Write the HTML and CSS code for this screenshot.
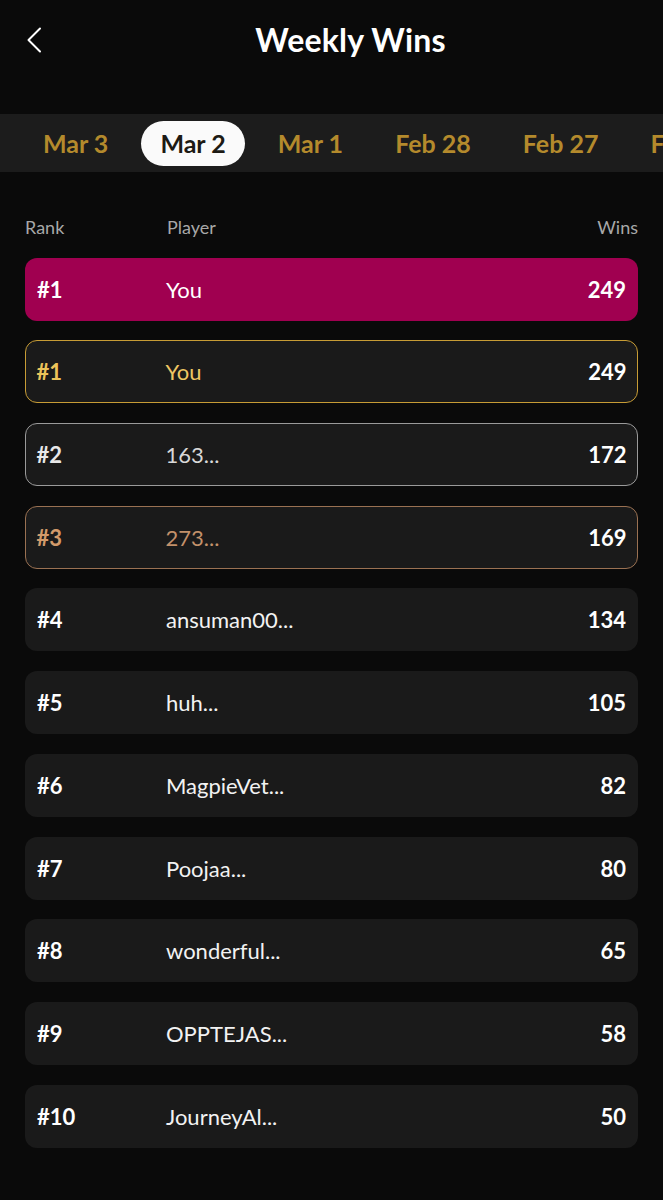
FILE: index.html
```html
<!DOCTYPE html>
<html>
<head>
<meta charset="utf-8">
<link rel="stylesheet" href="styles.css">
</head>
<body>
<div class="app">
  <header class="topbar">
    <button class="back" aria-label="Back">
      <svg width="16" height="26" viewBox="0 0 16 26"><path d="M14 1.5 L2.5 13 L14 24.5" fill="none" stroke="#fff" stroke-width="2" stroke-linecap="round" stroke-linejoin="round"/></svg>
    </button>
    <h1 class="title">Weekly Wins</h1>
  </header>

  <nav class="tabs">
    <span class="tab">Mar 3</span>
    <span class="tab active">Mar 2</span>
    <span class="tab">Mar 1</span>
    <span class="tab">Feb 28</span>
    <span class="tab">Feb 27</span>
    <span class="tab">Feb 26</span>
  </nav>

  <section class="board">
    <div class="cols">
      <span class="c-rank">Rank</span>
      <span class="c-player">Player</span>
      <span class="c-wins">Wins</span>
    </div>
    <div class="row me"><span class="rank">#1</span><span class="name">You</span><span class="wins">249</span></div>
    <div class="row gold"><span class="rank">#1</span><span class="name">You</span><span class="wins">249</span></div>
    <div class="row silver"><span class="rank">#2</span><span class="name">163...</span><span class="wins">172</span></div>
    <div class="row bronze"><span class="rank">#3</span><span class="name">273...</span><span class="wins">169</span></div>
    <div class="row"><span class="rank">#4</span><span class="name">ansuman00...</span><span class="wins">134</span></div>
    <div class="row"><span class="rank">#5</span><span class="name">huh...</span><span class="wins">105</span></div>
    <div class="row"><span class="rank">#6</span><span class="name">MagpieVet...</span><span class="wins">82</span></div>
    <div class="row"><span class="rank">#7</span><span class="name">Poojaa...</span><span class="wins">80</span></div>
    <div class="row"><span class="rank">#8</span><span class="name">wonderful...</span><span class="wins">65</span></div>
    <div class="row"><span class="rank">#9</span><span class="name">OPPTEJAS...</span><span class="wins">58</span></div>
    <div class="row"><span class="rank">#10</span><span class="name">JourneyAl...</span><span class="wins">50</span></div>
  </section>
</div>
</body>
</html>
```
FILE: styles.css
```css
* { box-sizing: border-box; }
html, body { margin: 0; padding: 0; }
body {
  background: #0a0a0a;
  color: #fff;
  font-family: "Lato", "Open Sans", sans-serif;
  width: 663px;
  height: 1200px;
  overflow: hidden;
}
.app { display: flex; flex-direction: column; }

.topbar {
  height: 114px;
  position: relative;
  display: flex;
  justify-content: center;
  padding-top: 20px;
  padding-left: 38px;
}
.back {
  position: absolute;
  left: 26px;
  top: 27px;
  background: none;
  border: 0;
  padding: 0;
  width: 16px;
  height: 26px;
}
.title {
  margin: 0;
  font-size: 32px;
  font-weight: 700;
  line-height: 40px;
  letter-spacing: 0.2px;
}

.tabs {
  height: 58px;
  background: #1c1c1c;
  display: flex;
  align-items: center;
  gap: 52px;
  padding-left: 43px;
  white-space: nowrap;
  overflow: hidden;
}
.tab {
  color: #b48a2c;
  font-size: 25px;
  font-weight: 700;
  height: 45px;
  line-height: 45px;
  border-radius: 23px;
  flex: none;
}
.tab.active {
  background: #fafafa;
  color: #1d1a14;
  margin: 0 -19px;
  padding: 0 19px;
}

.board {
  padding: 44px 25px 0 25px;
  display: flex;
  flex-direction: column;
  gap: 19.7px;
}
.cols {
  display: grid;
  grid-template-columns: 142px 1fr auto;
  color: #a8a8a8;
  font-size: 18px;
  line-height: 22px;
  height: 22px;
}
.c-wins { text-align: right; }

.row {
  height: 63px;
  border-radius: 12px;
  background: #1a1a1a;
  display: grid;
  grid-template-columns: 129px 1fr auto;
  align-items: center;
  padding: 0 12px;
  font-size: 22px;
}
.rank { font-weight: 700; color: #fff; }
.name { color: #f2f2f2; font-weight: 400; }
.wins { font-weight: 700; text-align: right; }

.row.me { background: #a00050; }
.row.me .name { color: #fff; }

.row.gold { border: 1.5px solid #c79c35; padding: 0 10.5px; }
.row.gold .rank { color: #ecc35a; }
.row.gold .name { color: #eec664; }

.row.silver { border: 1.5px solid #9a9a9a; padding: 0 10.5px; }
.row.silver .rank { color: #e8e8e8; }
.row.silver .name { color: #d8d8d8; }

.row.bronze { border: 1.5px solid #9a7152; padding: 0 10.5px; }
.row.bronze .rank { color: #d29a6a; }
.row.bronze .name { color: #c3916a; }
```
